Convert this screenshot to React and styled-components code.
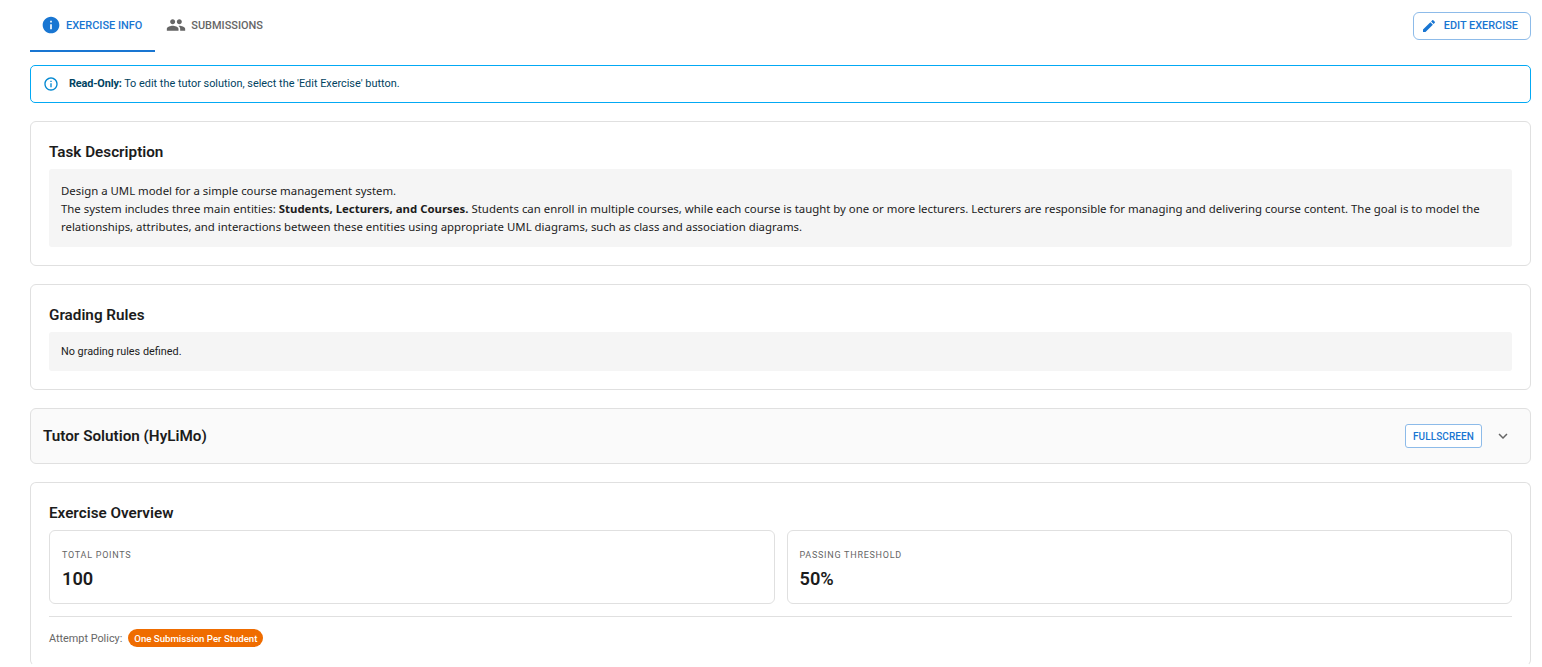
import React from "react";
import styled, { createGlobalStyle } from "styled-components";

const GlobalStyle = createGlobalStyle`
  html, body {
    margin: 0;
    padding: 0;
    background: #fff;
    height: 667px;
    overflow: hidden;
    font-family: Roboto, "Liberation Sans", sans-serif;
    color: #1c1c1c;
  }
`;

const Page = styled.div`
  display: flex;
  flex-direction: column;
  padding: 0 11px 0 30px;
`;

const TopBar = styled.div`
  display: flex;
  justify-content: space-between;
  align-items: flex-start;
  height: 65px;
`;

const Tabs = styled.div`
  display: flex;
`;

const Tab = styled.div`
  display: flex;
  align-items: center;
  gap: 5px;
  height: 50px;
  padding: 0 ${(p) => (p.$active ? "13px" : "12px")} 0 11px;
  font-size: 10.95px;
  font-weight: 500;
  color: ${(p) => (p.$active ? "#1976d2" : "#666")};
  border-bottom: 2px solid ${(p) => (p.$active ? "#1976d2" : "transparent")};
`;

const Icon = styled.svg`
  width: ${(p) => p.$size || 20}px;
  height: ${(p) => p.$size || 20}px;
  fill: currentColor;
  flex: none;
`;

const EditButton = styled.button`
  display: flex;
  align-items: center;
  gap: 7px;
  margin-top: 12px;
  height: 28px;
  padding: 0 12px 1px 7px;
  background: #fff;
  border: 1px solid #8dbbe9;
  border-radius: 6px;
  color: #1976d2;
  font-family: inherit;
  font-size: 10.9px;
  font-weight: 500;
`;

const Alert = styled.div`
  display: flex;
  align-items: center;
  gap: 10px;
  box-sizing: border-box;
  height: 38px;
  padding: 0 12px 1px;
  border: 1px solid #03a9f4;
  border-radius: 5px;
  font-size: 10.9px;
  color: #014361;
  margin-bottom: 18px;
  svg {
    color: #0288d1;
  }
  b {
    font-weight: 700;
    letter-spacing: -0.15px;
  }
`;

const Card = styled.section`
  box-sizing: border-box;
  border: 1px solid #e0e0e0;
  border-radius: 6px;
  padding: 20px 18px 18px;
  margin-bottom: 18px;
`;

const Title = styled.h2`
  margin: 0 0 7px;
  font-size: 15.25px;
  line-height: 20px;
  font-weight: 600;
  color: #1c1c1c;
`;

const Description = styled.div`
  background: #f5f5f5;
  border-radius: 3px;
  padding: 13px 12px 11px;
  font-family: "Noto Sans", "Open Sans", sans-serif;
  font-size: 11.4px;
  line-height: 18px;
  color: #1c1c1c;
  b {
    font-weight: 700;
  }
`;

const EmptyRules = styled.div`
  background: #f5f5f5;
  border-radius: 3px;
  padding: 0 12px;
  height: 39px;
  display: flex;
  align-items: center;
  font-size: 10.85px;
  color: #1c1c1c;
`;

const Accordion = styled.section`
  display: flex;
  align-items: center;
  justify-content: space-between;
  box-sizing: border-box;
  height: 56px;
  padding: 0 18px 0 12px;
  background: #fafafa;
  border: 1px solid #e0e0e0;
  border-radius: 6px;
  margin-bottom: 18px;
`;

const AccordionTitle = styled.div`
  font-size: 15.25px;
  font-weight: 600;
  color: #1c1c1c;
`;

const AccordionActions = styled.div`
  display: flex;
  align-items: center;
  gap: 12px;
  svg {
    color: #666;
  }
`;

const FullscreenButton = styled.button`
  box-sizing: border-box;
  height: 24px;
  padding: 0 7px;
  background: #fff;
  border: 1px solid #8dbbe9;
  border-radius: 3px;
  color: #1976d2;
  font-family: inherit;
  font-size: 10px;
  font-weight: 500;
  letter-spacing: 0.01em;
`;

const OverviewCard = styled(Card)`
  margin-bottom: 0;
  border-bottom-color: transparent;
`;

const Stats = styled.div`
  display: grid;
  grid-template-columns: 1fr 1fr;
  gap: 12px;
  margin-bottom: 12px;
`;

const Stat = styled.div`
  box-sizing: border-box;
  height: 74px;
  border: 1px solid #e0e0e0;
  border-radius: 6px;
  padding: 17px 12px 0;
`;

const StatLabel = styled.div`
  font-size: 9px;
  line-height: 14px;
  letter-spacing: 0.74px;
  color: #666;
`;

const StatValue = styled.div`
  font-size: 18.2px;
  line-height: 24px;
  margin-top: 5px;
  font-weight: 600;
  color: #1c1c1c;
`;

const PolicyRow = styled.div`
  display: flex;
  align-items: center;
  gap: 6px;
  border-top: 1px solid #e0e0e0;
  padding-top: 12px;
  font-size: 10.85px;
  color: #666;
`;

const Badge = styled.span`
  display: inline-flex;
  align-items: center;
  height: 18px;
  padding: 0 6px;
  border-radius: 9px;
  background: #ef6c00;
  color: #fff;
  font-size: 9.65px;
  font-weight: 500;
`;

const paths = {
  info: "M12 2C6.48 2 2 6.48 2 12s4.48 10 10 10 10-4.48 10-10S17.52 2 12 2zm1 15h-2v-6h2v6zm0-8h-2V7h2v2z",
  infoOutlined:
    "M11 7h2v2h-2zm0 4h2v6h-2zm1-9C6.48 2 2 6.48 2 12s4.48 10 10 10 10-4.48 10-10S17.52 2 12 2zm0 18c-4.41 0-8-3.59-8-8s3.59-8 8-8 8 3.59 8 8-3.59 8-8 8z",
  people:
    "M16 11c1.66 0 2.99-1.34 2.99-3S17.66 5 16 5c-1.66 0-3 1.34-3 3s1.34 3 3 3zm-8 0c1.66 0 2.99-1.34 2.99-3S9.66 5 8 5C6.34 5 5 6.34 5 8s1.34 3 3 3zm0 2c-2.33 0-7 1.17-7 3.5V19h14v-2.5c0-2.33-4.67-3.5-7-3.5zm8 0c-.29 0-.62.02-.97.05 1.16.84 1.97 1.97 1.97 3.45V19h6v-2.5c0-2.33-4.67-3.5-7-3.5z",
  edit: "M3 17.25V21h3.75L17.81 9.94l-3.75-3.75L3 17.25zM20.71 7.04c.39-.39.39-1.02 0-1.41l-2.34-2.34c-.39-.39-1.02-.39-1.41 0l-1.83 1.83 3.75 3.75 1.83-1.83z",
  expand: "M16.59 8.59L12 13.17 7.41 8.59 6 10l6 6 6-6z",
};

const MuiIcon = ({ name, size }) => (
  <Icon viewBox="0 0 24 24" $size={size}>
    <path d={paths[name]} />
  </Icon>
);

export default function App() {
  return (
    <>
      <GlobalStyle />
      <Page>
        <TopBar>
          <Tabs>
            <Tab $active>
              <MuiIcon name="info" />
              EXERCISE INFO
            </Tab>
            <Tab>
              <MuiIcon name="people" />
              SUBMISSIONS
            </Tab>
          </Tabs>
          <EditButton>
            <MuiIcon name="edit" size={16} />
            EDIT EXERCISE
          </EditButton>
        </TopBar>

        <Alert>
          <MuiIcon name="infoOutlined" size={16} />
          <span>
            <b>Read-Only:</b> To edit the tutor solution, select the 'Edit Exercise' button.
          </span>
        </Alert>

        <Card>
          <Title>Task Description</Title>
          <Description>
            Design a UML model for a simple course management system.
            <br />
            The system includes three main entities: <b>Students, Lecturers, and Courses.</b> Students can
            enroll in multiple courses, while each course is taught by one or more lecturers. Lecturers are
            responsible for managing and delivering course content. The goal is to model the relationships,
            attributes, and interactions between these entities using appropriate UML diagrams, such as class
            and association diagrams.
          </Description>
        </Card>

        <Card>
          <Title>Grading Rules</Title>
          <EmptyRules>No grading rules defined.</EmptyRules>
        </Card>

        <Accordion>
          <AccordionTitle>Tutor Solution (HyLiMo)</AccordionTitle>
          <AccordionActions>
            <FullscreenButton>FULLSCREEN</FullscreenButton>
            <MuiIcon name="expand" size={18} />
          </AccordionActions>
        </Accordion>

        <OverviewCard>
          <Title>Exercise Overview</Title>
          <Stats>
            <Stat>
              <StatLabel>TOTAL POINTS</StatLabel>
              <StatValue>100</StatValue>
            </Stat>
            <Stat>
              <StatLabel>PASSING THRESHOLD</StatLabel>
              <StatValue>50%</StatValue>
            </Stat>
          </Stats>
          <PolicyRow>
            Attempt Policy:
            <Badge>One Submission Per Student</Badge>
          </PolicyRow>
        </OverviewCard>
      </Page>
    </>
  );
}
